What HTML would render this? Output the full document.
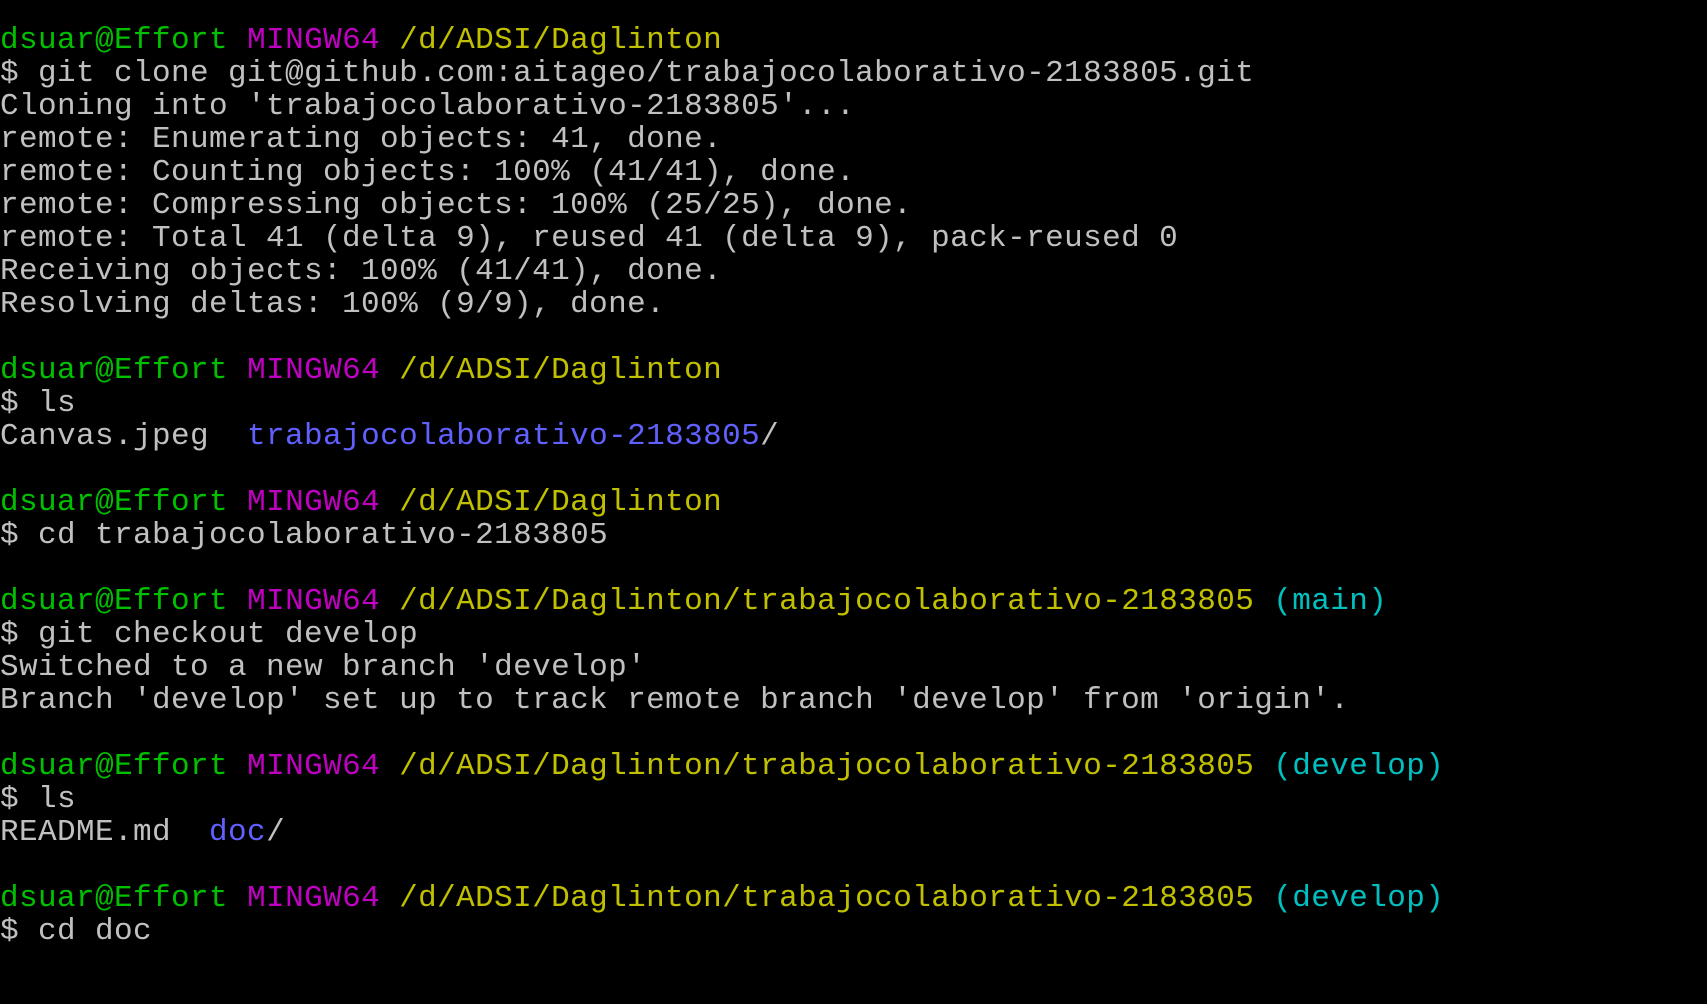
<!DOCTYPE html>
<html><head><meta charset="utf-8"><style>
html,body{margin:0;padding:0;background:#000;width:1707px;height:1004px;overflow:hidden}
pre{margin:0;padding:24px 0 0 0;font-family:"Liberation Mono","DejaVu Sans Mono",monospace;font-size:31px;letter-spacing:0.4px;line-height:33px;color:#c0c0c0;white-space:pre}
.g{color:#00c000}.m{color:#c000c0}.y{color:#c0c000}.c{color:#00c0c0}.b{color:#6060ff}
</style></head><body><pre><span class="g">dsuar@Effort</span> <span class="m">MINGW64</span> <span class="y">/d/ADSI/Daglinton</span>
$ git clone git@github.com:aitageo/trabajocolaborativo-2183805.git
Cloning into 'trabajocolaborativo-2183805'...
remote: Enumerating objects: 41, done.
remote: Counting objects: 100% (41/41), done.
remote: Compressing objects: 100% (25/25), done.
remote: Total 41 (delta 9), reused 41 (delta 9), pack-reused 0
Receiving objects: 100% (41/41), done.
Resolving deltas: 100% (9/9), done.

<span class="g">dsuar@Effort</span> <span class="m">MINGW64</span> <span class="y">/d/ADSI/Daglinton</span>
$ ls
Canvas.jpeg  <span class="b">trabajocolaborativo-2183805</span>/

<span class="g">dsuar@Effort</span> <span class="m">MINGW64</span> <span class="y">/d/ADSI/Daglinton</span>
$ cd trabajocolaborativo-2183805

<span class="g">dsuar@Effort</span> <span class="m">MINGW64</span> <span class="y">/d/ADSI/Daglinton/trabajocolaborativo-2183805</span> <span class="c">(main)</span>
$ git checkout develop
Switched to a new branch 'develop'
Branch 'develop' set up to track remote branch 'develop' from 'origin'.

<span class="g">dsuar@Effort</span> <span class="m">MINGW64</span> <span class="y">/d/ADSI/Daglinton/trabajocolaborativo-2183805</span> <span class="c">(develop)</span>
$ ls
README.md  <span class="b">doc</span>/

<span class="g">dsuar@Effort</span> <span class="m">MINGW64</span> <span class="y">/d/ADSI/Daglinton/trabajocolaborativo-2183805</span> <span class="c">(develop)</span>
$ cd doc
</pre></body></html>
